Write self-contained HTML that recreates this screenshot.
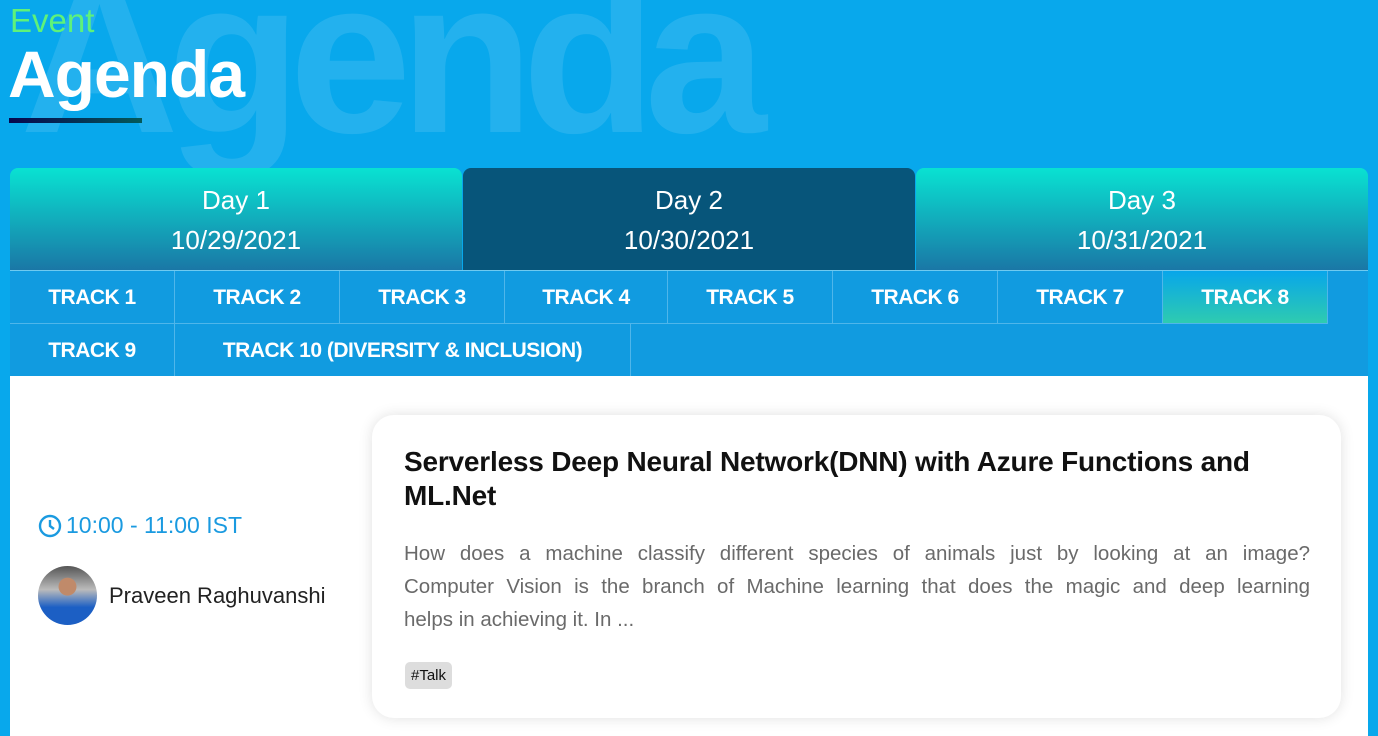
<!DOCTYPE html>
<html><head><meta charset="utf-8"><style>
*{margin:0;padding:0;box-sizing:border-box}
body{width:1378px;height:728px;overflow:hidden;background:#08a8ec;font-family:"Liberation Sans",sans-serif;position:relative}
.bg{position:absolute;left:20px;top:-70px;font-size:220px;font-weight:bold;color:rgba(255,255,255,0.11);letter-spacing:-12px;white-space:nowrap}
.ev{position:absolute;left:10px;top:2px;font-size:33px;color:#5ef27a}
.ag{position:absolute;left:8px;top:36px;font-size:66px;font-weight:bold;color:#fff;letter-spacing:-1px}
.ul{position:absolute;left:9px;top:118px;width:133px;height:5px;background:linear-gradient(90deg,#06064e,#035a5a)}
.day{position:absolute;top:168px;height:102px;width:452px;border-radius:8px 8px 0 0;color:#fff;text-align:center;font-size:26px;line-height:40px;padding-top:12px;background:linear-gradient(#09e2d2,#1a77a6)}
.day.a{background:#07557a}
.tracks{position:absolute;left:10px;top:270px;width:1358px;height:106px;background:#119be0;border-top:1px solid #6fcaf0}
.t{position:absolute;height:53px;border-right:1px solid #4fb6ea;border-bottom:1px solid #4fb6ea;color:#fff;font-weight:bold;font-size:21px;text-align:center;line-height:53px;letter-spacing:-0.5px}
.t.s{background:linear-gradient(#08a6ea,#2ecbb0)}
.panel{position:absolute;left:10px;top:376px;width:1358px;height:360px;background:#fff}
.time{position:absolute;left:38px;top:512px;font-size:23px;color:#1a9ae0;display:flex;align-items:center;gap:4px}
.av{position:absolute;left:38px;top:566px;width:59px;height:59px;border-radius:50%;background:radial-gradient(circle at 50% 35%,#c08a6a 0 18%,transparent 19%),linear-gradient(#555 0,#bbb 40%,#1c5fc4 70%,#1c5fc4)}
.nm{position:absolute;left:109px;top:583px;font-size:22px;color:#222}
.card{position:absolute;left:372px;top:415px;width:969px;height:303px;background:#fff;border-radius:22px;box-shadow:0 0 14px rgba(0,0,0,0.12)}
.ti{position:absolute;left:32px;top:30px;width:900px;font-size:28px;font-weight:bold;color:#111;line-height:34px;letter-spacing:-0.2px}
.ds{position:absolute;left:32px;top:122px;width:906px;font-size:20.5px;color:#6a6a6a;line-height:33px}
.ds div{text-align:justify;text-align-last:justify;white-space:nowrap;word-spacing:0}
.ds div.l{text-align-last:left}
.tag{position:absolute;left:33px;top:247px;padding:0 6px;height:27px;line-height:27px;background:#ddd;border-radius:5px;font-size:15px;color:#111}
</style></head><body>
<div class="bg">Agenda</div>
<div class="ev">Event</div>
<div class="ag">Agenda</div>
<div class="ul"></div>
<div class="day" style="left:10px">Day 1<br>10/29/2021</div>
<div class="day a" style="left:463px">Day 2<br>10/30/2021</div>
<div class="day" style="left:916px">Day 3<br>10/31/2021</div>
<div class="tracks">
<div class="t" style="left:0;top:0;width:165px">TRACK 1</div>
<div class="t" style="left:165px;top:0;width:165px">TRACK 2</div>
<div class="t" style="left:330px;top:0;width:165px">TRACK 3</div>
<div class="t" style="left:495px;top:0;width:163px">TRACK 4</div>
<div class="t" style="left:658px;top:0;width:165px">TRACK 5</div>
<div class="t" style="left:823px;top:0;width:165px">TRACK 6</div>
<div class="t" style="left:988px;top:0;width:165px">TRACK 7</div>
<div class="t s" style="left:1153px;top:0;width:165px">TRACK 8</div>
<div class="t" style="left:0;top:53px;width:165px">TRACK 9</div>
<div class="t" style="left:165px;top:53px;width:456px">TRACK 10 (DIVERSITY &amp; INCLUSION)</div>
</div>
<div class="panel"></div>
<div class="time"><svg width="24" height="24" viewBox="0 0 24 24" fill="none" stroke="#1a9ae0" stroke-width="2.4"><circle cx="12" cy="12" r="10"/><path d="M12 6v6l4 3"/></svg>10:00 - 11:00 IST</div>
<div class="av"></div>
<div class="nm">Praveen Raghuvanshi</div>
<div class="card">
<div class="ti">Serverless Deep Neural Network(DNN) with Azure Functions and ML.Net</div>
<div class="ds"><div>How does a machine classify different species of animals just by looking at an image?</div><div>Computer Vision is the branch of Machine learning that does the magic and deep learning</div><div class="l">helps in achieving it. In ...</div></div>
<div class="tag">#Talk</div>
</div>
</body></html>
